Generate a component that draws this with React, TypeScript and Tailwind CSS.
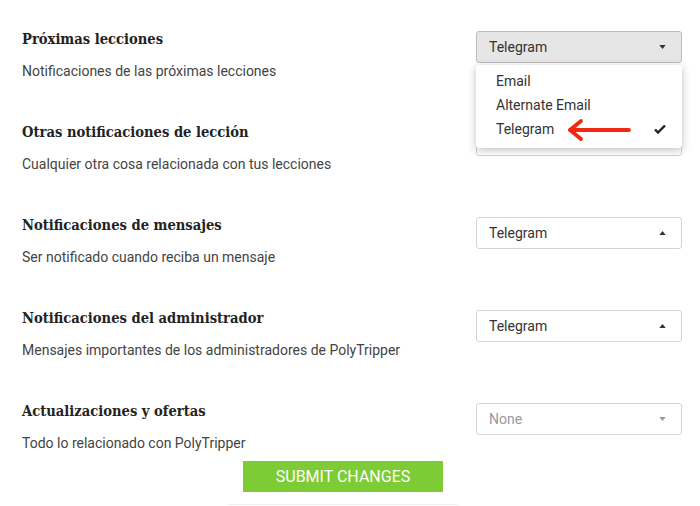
import { ReactNode } from "react";

type Row = {
  title: string;
  desc: string;
  value: string;
  caret: "up" | "down";
  active?: boolean;
  muted?: boolean;
  covered?: boolean;
};

const rows: Row[] = [
  { title: "Próximas lecciones", desc: "Notificaciones de las próximas lecciones", value: "Telegram", caret: "down", active: true },
  { title: "Otras notificaciones de lección", desc: "Cualquier otra cosa relacionada con tus lecciones", value: "Telegram", caret: "down", covered: true },
  { title: "Notificaciones de mensajes", desc: "Ser notificado cuando reciba un mensaje", value: "Telegram", caret: "up" },
  { title: "Notificaciones del administrador", desc: "Mensajes importantes de los administradores de PolyTripper", value: "Telegram", caret: "up" },
  { title: "Actualizaciones y ofertas", desc: "Todo lo relacionado con PolyTripper", value: "None", caret: "down", muted: true },
];

const Caret = ({ dir, muted }: { dir: "up" | "down"; muted?: boolean }) => (
  <svg width="7" height="4" viewBox="0 0 8 5" className={muted ? "text-[#999]" : "text-[#333]"}>
    {dir === "down" ? <path d="M0 0h8L4 5z" fill="currentColor" /> : <path d="M0 5h8L4 0z" fill="currentColor" />}
  </svg>
);

const Menu = () => (
  <div className="absolute left-0 top-[34px] z-10 w-full rounded-[3px] bg-white pt-[4px] pb-[7px] shadow-[0_2px_8px_rgba(0,0,0,0.25)]">
    {["Email", "Alternate Email", "Telegram"].map((item) => (
      <div key={item} className="relative flex h-[24px] items-center pl-[20px] text-[14px] text-[#333]">
        {item}
        {item === "Telegram" && (
          <svg width="12" height="10" viewBox="0 0 12 10" className="absolute right-[16px]">
            <path d="M1 5.5l3 3L11 1.5" stroke="#222" strokeWidth="2.4" fill="none" />
          </svg>
        )}
      </div>
    ))}
  </div>
);

const Select = ({ row, children }: { row: Row; children?: ReactNode }) => (
  <div className="relative mt-[2px] w-[206px] shrink-0">
    <div
      className={
        "flex h-[32px] items-center justify-between rounded-[3px] border pl-[12px] pr-[15px] text-[14px] " +
        (row.active ? "border-[#bdbdbd] bg-[#e6e6e6] " : "border-[#d4d4d4] bg-white ") +
        (row.muted ? "text-[#999]" : "text-[#333]")
      }
    >
      {!row.covered && (
        <>
          <span>{row.value}</span>
          <Caret dir={row.caret} muted={row.muted} />
        </>
      )}
    </div>
    {children}
  </div>
);

export default function App() {
  return (
    <div className="relative h-[506px] w-[700px] overflow-hidden bg-white pt-[29px] pl-[22px] pr-[18px] font-['Roboto',sans-serif]">
      {rows.map((row, i) => (
        <div key={row.title} className={"flex h-[93px] items-start justify-between " + (i === 0 ? "relative z-20" : "")}>
          <div className="flex flex-col">
            <div className="font-['DejaVu_Serif_Condensed','DejaVu_Serif',serif] text-[14.6px] font-bold leading-[20px] text-[#222]">
              {row.title}
            </div>
            <div className="mt-[12px] text-[14px] leading-[20px] text-[#444]">{row.desc}</div>
          </div>
          <Select row={row}>{i === 0 && <Menu />}</Select>
        </div>
      ))}
      <div className="-mt-[33px] ml-[221px] flex w-[200px] flex-col items-center">
        <button className="h-[31px] w-[200px] bg-[#7dcb35] text-[16px] uppercase text-white">Submit changes</button>
        <div className="mt-[12px] h-px w-[230px] bg-[#f0f0f0]" />
      </div>
      <svg width="68" height="24" viewBox="0 0 68 24" className="absolute left-[565px] top-[118px] z-30">
        <path d="M5 12H64" stroke="#f02a10" strokeWidth="3.8" strokeLinecap="round" />
        <path d="M16 3L5 12l11 9" stroke="#f02a10" strokeWidth="3.8" fill="none" strokeLinecap="round" strokeLinejoin="round" />
      </svg>
    </div>
  );
}
